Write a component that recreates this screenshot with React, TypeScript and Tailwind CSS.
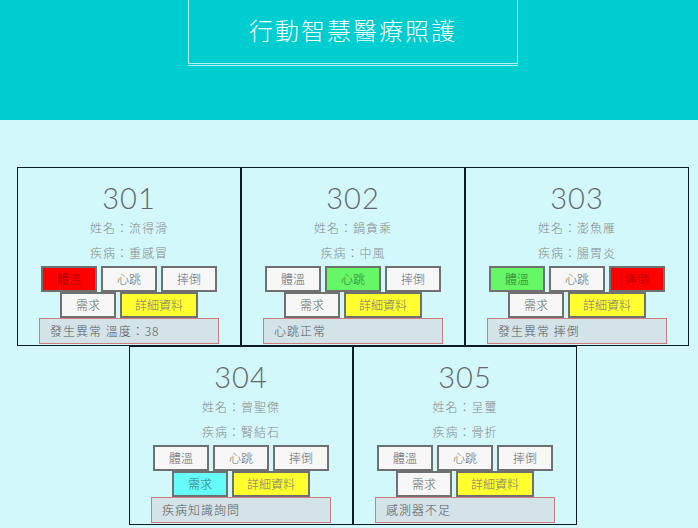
import React from 'react';

type Tone = 'white' | 'red' | 'green' | 'cyan';

interface Room {
  no: string;
  name: string;
  disease: string;
  temp: Tone;
  heart: Tone;
  fall: Tone;
  need: Tone;
  status: string;
}

const rooms: Room[] = [
  { no: '301', name: '流得滑', disease: '重感冒', temp: 'red', heart: 'white', fall: 'white', need: 'white', status: '發生異常 溫度：38' },
  { no: '302', name: '鍋貪乘', disease: '中風', temp: 'white', heart: 'green', fall: 'white', need: 'white', status: '心跳正常' },
  { no: '303', name: '澎魚雁', disease: '腸胃炎', temp: 'green', heart: 'white', fall: 'red', need: 'white', status: '發生異常 摔倒' },
  { no: '304', name: '曾聖傑', disease: '腎結石', temp: 'white', heart: 'white', fall: 'white', need: 'cyan', status: '疾病知識詢問' },
  { no: '305', name: '呈璽', disease: '骨折', temp: 'white', heart: 'white', fall: 'white', need: 'white', status: '感測器不足' },
];

const toneClass: Record<Tone, string> = {
  white: 'bg-[#f7f7f7] text-[#666]',
  red: 'bg-[#ff0000] text-[#a80000]',
  green: 'bg-[#66f766] text-[#2f7a2f]',
  cyan: 'bg-[#66fbfb] text-[#3a7070]',
};

function Btn({ label, tone, w }: { label: string; tone: Tone | 'yellow'; w: string }) {
  const cls = tone === 'yellow' ? 'bg-[#ffff2e] text-[#777]' : toneClass[tone];
  return (
    <div className={`${w} h-[26px] flex items-center justify-center border-2 border-[#707070] text-[12px] font-light ${cls}`}>
      {label}
    </div>
  );
}

function RoomCard({ room }: { room: Room }) {
  return (
    <div className="w-[224px] h-[179px] border border-[#0b1b22] flex flex-col items-center">
      <div className="mt-[15px] h-[30px] leading-[30px] text-[29px] font-light text-[#666] font-['Lato',sans-serif] tracking-[1px]">
        {room.no}
      </div>
      <div className="mt-[5px] h-[20px] leading-[20px] text-[12px] font-light text-[#888] tracking-[1px]">姓名：{room.name}</div>
      <div className="mt-[5px] h-[20px] leading-[20px] text-[12px] font-light text-[#888] tracking-[1px]">疾病：{room.disease}</div>
      <div className="mt-[3px] flex gap-[4px]">
        <Btn label="體溫" tone={room.temp} w="w-[56px]" />
        <Btn label="心跳" tone={room.heart} w="w-[56px]" />
        <Btn label="摔倒" tone={room.fall} w="w-[56px]" />
      </div>
      <div className="flex gap-[4px]">
        <Btn label="需求" tone={room.need} w="w-[56px]" />
        <Btn label="詳細資料" tone="yellow" w="w-[78px]" />
      </div>
      <div className="w-[180px] h-[26px] border border-[#d07c7c] bg-[#d4e3e8] pl-[10px] flex items-center text-[12px] font-light text-[#555] tracking-[1px]">
        {room.status}
      </div>
    </div>
  );
}

export default function App() {
  return (
    <div className="min-h-[528px] bg-[#d2f8fc] font-['Noto_Sans_CJK_TC',sans-serif]">
      <div className="h-[120px] bg-[#00cdd0] flex justify-center pl-[8px]">
        <div className="w-[330px] h-[66px] border-b border-[#b4f0f2] pb-px">
          <div className="h-full border-x border-b border-[#b4f0f2] flex items-center justify-center pb-[3px] text-[#f4ffff] text-[24px] tracking-[2px] font-light">
            行動智慧醫療照護
          </div>
        </div>
      </div>
      <div className="pt-[47px] pl-[8px] flex flex-col items-center">
        <div className="flex">
          {rooms.slice(0, 3).map((r) => (
            <RoomCard key={r.no} room={r} />
          ))}
        </div>
        <div className="flex">
          {rooms.slice(3).map((r) => (
            <RoomCard key={r.no} room={r} />
          ))}
        </div>
      </div>
    </div>
  );
}
